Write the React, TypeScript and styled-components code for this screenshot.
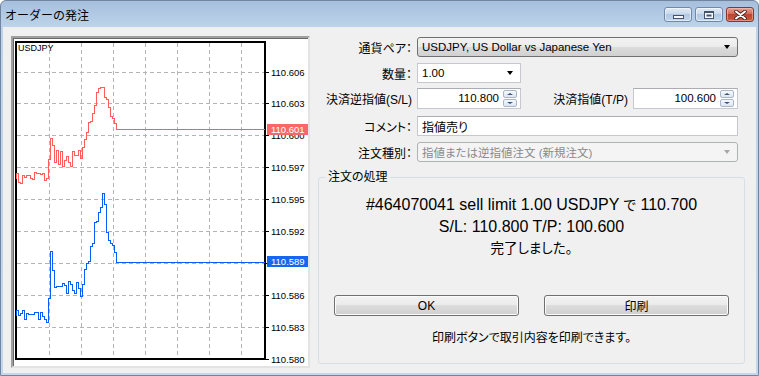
import styled, { createGlobalStyle } from 'styled-components'

const GlobalStyle = createGlobalStyle`
  html, body { margin: 0; padding: 0; background: #ffffff; }
  body {
    font-family: "Liberation Sans", "Noto Sans CJK JP", sans-serif;
    font-size: 12px;
    color: #000;
    font-feature-settings: "palt";
  }
  * { box-sizing: border-box; }
`

// チャート用データ
type Pt = [number, number]

const seeded = (seed: number) => {
  let s = seed
  return () => {
    s = (s * 16807) % 2147483647
    return s / 2147483647
  }
}

const buildSeries = (keys: Pt[], amp: (x: number) => number, seed: number, endX: number) => {
  const r = seeded(seed)
  const pts: string[] = []
  let prev = keys[0][1]
  const lastX = keys[keys.length - 1][0]
  for (let x = keys[0][0]; x <= lastX; x += 2) {
    let i = 0
    while (i < keys.length - 2 && keys[i + 1][0] < x) i++
    const [x0, y0] = keys[i]
    const [x1, y1] = keys[i + 1]
    const base = y0 + ((y1 - y0) * (x - x0)) / (x1 - x0 || 1)
    const y = Math.round(base + (r() - 0.5) * 2 * amp(x)) + 0.5
    pts.push(`${x},${prev}`, `${x},${y}`)
    prev = y
  }
  pts.push(`${lastX},${keys[keys.length - 1][1] + 0.5}`, `${endX},${keys[keys.length - 1][1] + 0.5}`)
  return pts.join(' ')
}

const noise = (x: number) => (x < 48 ? 6 : x < 84 ? 8 : x < 112 ? 6 : 0)

const bluePts = buildSeries(
  [[16, 316], [30, 314], [46, 318], [48, 300], [50, 258], [53, 283], [65, 288], [80, 290],
   [83, 280], [86, 262], [90, 248], [94, 228], [98, 208], [102, 196], [104, 208], [106, 228],
   [109, 238], [113, 247], [116, 262]],
  noise, 11, 265
)

const redPts = buildSeries(
  [[16, 179], [30, 176], [46, 180], [48, 160], [50, 142], [53, 155], [65, 160], [80, 156],
   [83, 146], [86, 132], [90, 116], [94, 104], [98, 88], [101, 78], [104, 92], [106, 104],
   [109, 112], [113, 120], [116, 129]],
  noise, 29, 265
)

const gridX = [49, 81, 113, 145, 177, 209, 241]
const gridY = [72, 103, 135, 167, 199, 231, 263, 295, 327]
const priceRows: [number, string][] = [
  [72, '110.606'], [103, '110.603'], [135, '110.600'], [167, '110.597'], [199, '110.595'],
  [231, '110.592'], [295, '110.586'], [327, '110.583'], [359, '110.580'],
]

const PriceChart = () => (
  <ChartSvg width={295} height={328} viewBox="13 38 295 328">
    <g stroke="#b4b4b4" strokeWidth={1} strokeDasharray="4 3">
      {gridX.map((x) => (
        <path key={x} d={`M${x + 0.5} 43 V358`} />
      ))}
      {gridY.map((y) => (
        <path key={y} d={`M17 ${y + 0.5} H264`} />
      ))}
    </g>
    <rect x={16} y={42} width={249} height={317} fill="none" stroke="#000" strokeWidth={2} />
    {gridY.concat(359).map((y) => (
      <line key={y} x1={265} y1={y + 0.5} x2={269} y2={y + 0.5} stroke="#000" />
    ))}
    {priceRows.map(([y, p]) => (
      <text key={p} x={271} y={y + 4} fontSize={9.5} fontFamily="Liberation Sans, sans-serif" fill="#000">{p}</text>
    ))}
    <text x={18} y={51} fontSize={9} fontFamily="Liberation Sans, sans-serif" fill="#000">USDJPY</text>
    <polyline points={redPts} fill="none" stroke="#ff5c5c" strokeWidth={1} />
    <polyline points={bluePts} fill="none" stroke="#0a5ef5" strokeWidth={1} />
    <rect x={267} y={124} width={42} height={11} fill="#f86868" />
    <text x={271} y={133} fontSize={9.5} fontFamily="Liberation Sans, sans-serif" fill="#fff">110.601</text>
    <rect x={267} y={256} width={42} height={11} fill="#1468f0" />
    <text x={271} y={265} fontSize={9.5} fontFamily="Liberation Sans, sans-serif" fill="#fff">110.589</text>
  </ChartSvg>
)

const CloseGlyph = () => (
  <svg width="13" height="10" viewBox="0 0 13 10">
    <path d="M2 1.5 L11 8.5 M11 1.5 L2 8.5" stroke="#4a2020" strokeWidth="3.6" strokeLinecap="round" />
    <path d="M2 1.5 L11 8.5 M11 1.5 L2 8.5" stroke="#ffffff" strokeWidth="2" strokeLinecap="round" />
  </svg>
)

const Spinner = () => (
  <Spin>
    <SpinHalf><ArrowUp /></SpinHalf>
    <SpinHalf><ArrowDown $small /></SpinHalf>
  </Spin>
)

export default function App() {
  return (
    <>
      <GlobalStyle />
      <Window>
        <TitleBar>
          <Title>オーダーの発注</Title>
          <Caption>
            <CapButton>
              <MinIcon />
            </CapButton>
            <CapButton>
              <MaxIcon />
            </CapButton>
            <CapButton $close>
              <CloseGlyph />
            </CapButton>
          </Caption>
        </TitleBar>
        <Frame>
          <Client>
            <ChartFrame>
              <PriceChart />
            </ChartFrame>
            <Panel>
              <Row $top={1}>
                <Label>通貨ペア：</Label>
                <Combo $variant="button" $w={321}>
                  <ComboText>USDJPY, US Dollar vs Japanese Yen</ComboText>
                  <ArrowDown />
                </Combo>
              </Row>
              <Row $top={6}>
                <Label>数量：</Label>
                <Combo $variant="edit" $w={104}>
                  <ComboText>1.00</ComboText>
                  <ArrowDown />
                </Combo>
              </Row>
              <Row $top={5}>
                <Label>決済逆指値(S/L)</Label>
                <NumInput $w={104}>
                  <NumText>110.800</NumText>
                  <Spinner />
                </NumInput>
                <Label $w={107}>決済指値(T/P)</Label>
                <NumInput $w={105}>
                  <NumText>100.600</NumText>
                  <Spinner />
                </NumInput>
              </Row>
              <Row $top={8}>
                <Label>コメント：</Label>
                <TextBox>指値売り</TextBox>
              </Row>
              <Row $top={6}>
                <Label>注文種別：</Label>
                <Combo $variant="disabled" $w={321}>
                  <ComboText>指値または逆指値注文 (新規注文)</ComboText>
                  <ArrowDown $muted />
                </Combo>
              </Row>
              <Group>
                <Legend>注文の処理</Legend>
                <Message>
                  <div>#464070041 sell limit 1.00 USDJPY <Jp>で</Jp> 110.700</div>
                  <div>S/L: 110.800 T/P: 100.600</div>
                  <div><Jp>完了しました。</Jp></div>
                </Message>
                <ButtonRow>
                  <PushButton>OK</PushButton>
                  <PushButton>印刷</PushButton>
                </ButtonRow>
                <Note>印刷ボタンで取引内容を印刷できます。</Note>
              </Group>
            </Panel>
          </Client>
        </Frame>
      </Window>
    </>
  )
}

// Styled Components
const Window = styled.div`
  width: 759px;
  height: 376px;
  display: flex;
  flex-direction: column;
  border: 1px solid #71859e;
  border-radius: 6px 6px 0 0;
  overflow: hidden;
  background: linear-gradient(#a6bfdc, #bed4ec 27px, #c3d8ee);
`
const TitleBar = styled.div`
  height: 26px;
  display: flex;
  align-items: center;
  justify-content: space-between;
  padding: 0 4px 0 4px;
`
const Title = styled.span`
  font-family: "Noto Sans CJK JP", sans-serif;
  font-feature-settings: normal;
  font-size: 12px;
  color: #000;
  padding-top: 1px;
`
const Caption = styled.div`
  display: flex;
  gap: 3px;
  align-self: flex-start;
  margin-top: 6px;
`
const CapButton = styled.div<{ $close?: boolean }>`
  width: 28px;
  height: 15px;
  border-radius: 3px;
  display: flex;
  align-items: center;
  justify-content: center;
  border: 1px solid ${(p) => (p.$close ? '#84382e' : '#6f89ab')};
  box-shadow: inset 0 0 0 1px ${(p) => (p.$close ? 'rgba(255,200,190,0.5)' : 'rgba(255,255,255,0.5)')};
  background: ${(p) =>
    p.$close
      ? 'linear-gradient(#e5a295, #d26a5a 45%, #c0432f 50%, #c95a45)'
      : 'linear-gradient(#e2ebf6, #c9d9ec 45%, #b2c8e3 50%, #c2d5ec)'};
`
const MinIcon = styled.div`
  width: 11px;
  height: 4px;
  margin-top: 5px;
  background: #f4f7fb;
  border: 1px solid #45536a;
`
const MaxIcon = styled.div`
  width: 10px;
  height: 8px;
  background: #f4f7fb;
  border: 1px solid #45536a;
  border-top-width: 2px;
  box-shadow: inset 0 0 0 1.5px #f4f7fb, inset 0 0 0 3px #45536a;
`
const Frame = styled.div`
  flex: 1;
  display: flex;
  padding: 0 2px 2px 2px;
`
const Client = styled.div`
  flex: 1;
  display: flex;
  gap: 8px;
  padding: 9px 11px 5px 8px;
  background: #f0f0f0;
`
const ChartFrame = styled.div`
  width: 299px;
  height: 332px;
  background: #fff;
  border-style: solid;
  border-width: 2px;
  border-color: #a0a0a0 #e3e3e3 #e3e3e3 #a0a0a0;
  box-shadow: inset 1px 1px 0 #696969;
`
const ChartSvg = styled.svg`
  display: block;
  shape-rendering: crispEdges;
  text-rendering: optimizeLegibility;
`
const Panel = styled.div`
  flex: 1;
  display: flex;
  flex-direction: column;
`
const Row = styled.div<{ $top: number }>`
  display: flex;
  align-items: center;
  height: 20px;
  margin-top: ${(p) => p.$top}px;
  padding-right: 7px;
`
const Label = styled.div<{ $w?: number }>`
  width: ${(p) => p.$w ?? 94}px;
  flex: none;
  margin-right: 5px;
  text-align: right;
  white-space: nowrap;
  font-size: 12px;
`
const Combo = styled.div<{ $variant: 'button' | 'edit' | 'disabled'; $w: number }>`
  width: ${(p) => p.$w}px;
  height: 20px;
  display: flex;
  align-items: center;
  justify-content: space-between;
  padding: 0 7px 0 4px;
  font-size: 11.5px;
  border-radius: ${(p) => (p.$variant === 'edit' ? '0' : '3px')};
  border: 1px solid ${(p) => (p.$variant === 'button' ? '#707070' : p.$variant === 'edit' ? '#c5c9cf' : '#adb2b5')};
  color: ${(p) => (p.$variant === 'disabled' ? '#8a8a8a' : '#000')};
  background: ${(p) =>
    p.$variant === 'button'
      ? 'linear-gradient(#f3f3f3, #ebebeb 50%, #dddddd 50%, #d0d0d0)'
      : p.$variant === 'edit'
        ? '#ffffff'
        : '#f4f4f4'};
`
const ComboText = styled.span`
  white-space: nowrap;
`
const ArrowDown = styled.span<{ $muted?: boolean; $small?: boolean }>`
  width: 0;
  height: 0;
  border-left: ${(p) => (p.$small ? 3 : 3.5)}px solid transparent;
  border-right: ${(p) => (p.$small ? 3 : 3.5)}px solid transparent;
  border-top: ${(p) => (p.$small ? 2.5 : 4)}px solid ${(p) => (p.$muted ? '#a8a8a8' : '#000')};
`
const ArrowUp = styled.span`
  width: 0;
  height: 0;
  border-left: 3px solid transparent;
  border-right: 3px solid transparent;
  border-bottom: 2.5px solid #3f5374;
`
const NumInput = styled.div<{ $w: number }>`
  width: ${(p) => p.$w}px;
  height: 21px;
  display: flex;
  align-items: center;
  justify-content: flex-end;
  gap: 4px;
  padding: 0 3px 0 4px;
  background: #fff;
  border: 1px solid #c5c9cf;
  border-top-color: #abadb3;
`
const NumText = styled.span`
  font-size: 11.5px;
`
const Spin = styled.div`
  width: 14px;
  height: 17px;
  display: flex;
  flex-direction: column;
  gap: 1px;
`
const SpinHalf = styled.div`
  flex: 1;
  display: flex;
  align-items: center;
  justify-content: center;
  border: 1px solid #a9b7c9;
  border-radius: 2px;
  background: linear-gradient(#f6f9fc, #dce6f1);
  & > span { border-bottom-color: #3f5374; border-top-color: #3f5374; }
`
const TextBox = styled.div`
  flex: 1;
  height: 20px;
  display: flex;
  align-items: center;
  padding: 0 4px;
  background: #fff;
  border: 1px solid #c5c9cf;
  border-top-color: #abadb3;
  font-size: 12px;
`
const Jp = styled.span`
  font-size: 13.5px;
`
const Group = styled.fieldset`
  flex: 1;
  margin: 8px 0 4px 0;
  padding: 0;
  border: 1px solid #d5dfe5;
  border-radius: 3px;
  display: flex;
  flex-direction: column;
  align-items: center;
`
const Legend = styled.legend`
  margin-left: 7px;
  padding: 0 2px;
  font-size: 12px;
  line-height: 14px;
`
const Message = styled.div`
  margin-top: 10px;
  font-size: 16px;
  line-height: 21px;
  text-align: center;
  color: #000;
`
const ButtonRow = styled.div`
  display: flex;
  gap: 25px;
  margin-top: 36px;
`
const PushButton = styled.button`
  width: 185px;
  height: 21px;
  padding: 0;
  font-family: "Liberation Sans", "Noto Sans CJK JP", sans-serif;
  font-size: 12px;
  color: #000;
  border: 1px solid #707070;
  border-radius: 3px;
  box-shadow: inset 0 0 0 1px #fbfbfb;
  background: linear-gradient(#f2f2f2, #ebebeb 50%, #dddddd 50%, #cfcfcf);
`
const Note = styled.div`
  margin-top: 12px;
  font-size: 12px;
`
